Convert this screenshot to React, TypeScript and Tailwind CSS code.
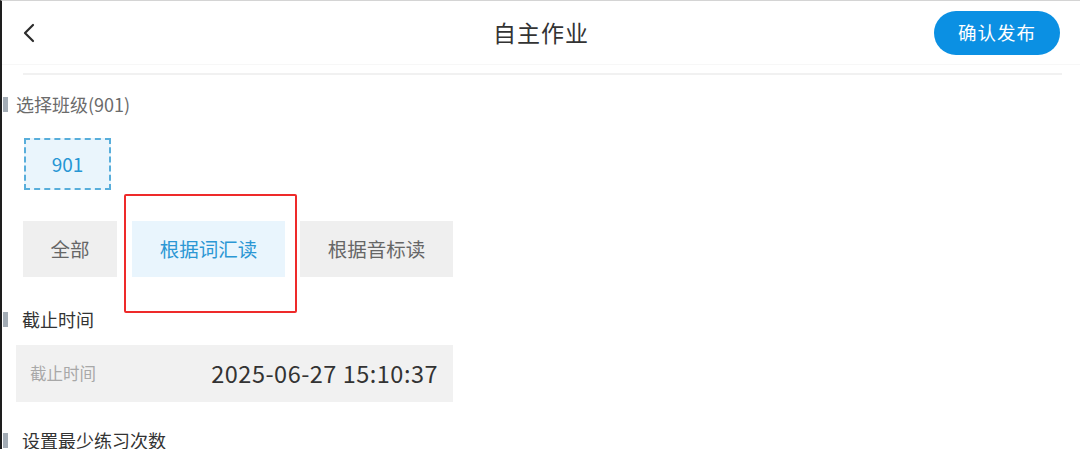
import { useState } from "react";

const tabs = ["全部", "根据词汇读", "根据音标读"];

function SectionTitle({ text, dark = false }: { text: string; dark?: boolean }) {
  return (
    <div className="flex items-center h-[24px]">
      <div className="w-[5px] h-[15px] ml-[1px] bg-[#a3acb5]" />
      <div
        className={`text-[18px] leading-[24px] ${dark ? "text-[#333333] ml-[14px]" : "text-[#6b6b6b] ml-[8px]"}`}
      >
        {text}
      </div>
    </div>
  );
}

export default function App() {
  const [active, setActive] = useState(1);

  return (
    <div
      className="relative w-[1080px] h-[449px] overflow-hidden bg-white border-l-2 border-l-[#1e1e1e] border-t border-t-[#d4d4d4]"
      style={{ fontFamily: '"Noto Sans CJK SC", "Noto Sans", sans-serif' }}
    >
      {/* header */}
      <div className="flex items-center h-[64px] pl-[20px] pr-[20px] border-b border-[#f7f7f7]">
        <div className="flex-1 flex items-center">
          <svg width="14" height="20" viewBox="0 0 14 20" fill="none">
            <path d="M11 2 L3 10 L11 18" stroke="#2b2b2b" strokeWidth="2.2" strokeLinecap="round" strokeLinejoin="round" />
          </svg>
        </div>
        <div className="text-[23px] text-[#333333] tracking-[1px]">自主作业</div>
        <div className="flex-1 flex justify-end">
          <button className="h-[44px] w-[126px] rounded-full bg-[#0b90e3] text-white text-[18.5px] tracking-[1px]">
            确认发布
          </button>
        </div>
      </div>

      <div className="ml-[21px] mr-[18px] mt-[8px] h-[2px] bg-[#f1f1f1]" />

      {/* class picker */}
      <div className="mt-[17px]">
        <SectionTitle text="选择班级(901)" />
      </div>
      <div className="mt-[22px] ml-[22px] flex">
        <div className="w-[87px] h-[52px] flex items-center justify-center border-2 border-dashed border-[#58aedb] bg-[#eaf5fc] text-[#2696d4] text-[19px]">
          901
        </div>
      </div>

      {/* read mode tabs */}
      <div className="mt-[31px] ml-[21px] flex gap-[15px]">
        {tabs.map((t, i) => (
          <div
            key={t}
            onClick={() => setActive(i)}
            className={`h-[56px] flex items-center justify-center text-[19.5px] cursor-pointer ${
              i === 0 ? "w-[94px]" : "w-[153px]"
            } ${i === active ? "bg-[#e9f5fd] text-[#2b97d4]" : "bg-[#efefef] text-[#666666]"}`}
          >
            {t}
          </div>
        ))}
      </div>

      {/* deadline */}
      <div className="mt-[30px]">
        <SectionTitle text="截止时间" dark />
      </div>
      <div className="mt-[14px] ml-[14px] w-[437px] h-[57px] bg-[#f1f1f1] flex items-center justify-between pl-[14px] pr-[15px]">
        <span className="text-[16.5px] text-[#a8a8a8]">截止时间</span>
        <span className="text-[23.5px] text-[#333333] tracking-[0.5px]">2025-06-27 15:10:37</span>
      </div>

      <div className="mt-[26px]">
        <SectionTitle text="设置最少练习次数" dark />
      </div>

      {/* highlight frame */}
      <div className="absolute left-[122px] top-[193px] w-[173px] h-[119px] border-2 border-[#ee2a2a] rounded-[2px]" />
    </div>
  );
}
